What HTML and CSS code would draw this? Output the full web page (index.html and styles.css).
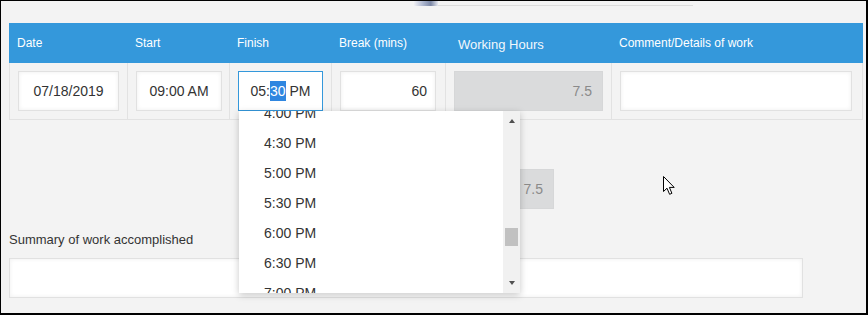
FILE: index.html
```html
<!DOCTYPE html>
<html lang="en">
<head>
    <meta charset="UTF-8">
    <title>Timesheet</title>
    <link rel="stylesheet" href="styles.css">
</head>
<body>
<div class="page">
    <div class="topstrip">
        <div class="thumbnail"></div>
        <div class="rule"></div>
    </div>

    <div class="sheet">
        <div class="row head">
            <div class="cell">Date</div>
            <div class="cell">Start</div>
            <div class="cell">Finish</div>
            <div class="cell">Break (mins)</div>
            <div class="cell wide">Working Hours</div>
            <div class="cell">Comment/Details of work</div>
        </div>
        <div class="row body">
            <div class="cell"><div class="field date">07/18/2019</div></div>
            <div class="cell"><div class="field start">09:00 AM</div></div>
            <div class="cell"><div class="field finish focus">05:<span class="sel">30</span> PM</div></div>
            <div class="cell"><div class="field brk right">60</div></div>
            <div class="cell"><div class="field hours right readonly">7.5</div></div>
            <div class="cell"><div class="field comment"></div></div>
        </div>
    </div>

    <div class="totals">
        <div class="field total right readonly">7.5</div>
    </div>

    <div class="label">Summary of work accomplished</div>
    <div class="field summary"></div>
</div>

<div class="dropdown">
    <div class="options">
        <div class="list">
            <div class="option">4:00 PM</div>
            <div class="option">4:30 PM</div>
            <div class="option">5:00 PM</div>
            <div class="option">5:30 PM</div>
            <div class="option">6:00 PM</div>
            <div class="option">6:30 PM</div>
            <div class="option">7:00 PM</div>
        </div>
    </div>
    <div class="scrollbar">
        <div class="arrow up"></div>
        <div class="track"><div class="thumb"></div></div>
        <div class="arrow down"></div>
    </div>
</div>

<svg class="cursor" width="13" height="20" viewBox="0 0 13 20">
    <path d="M0.5 0.5 L0.5 15.5 L4 12.2 L6.6 18.3 L8.9 17.3 L6.4 11.4 L11.2 11.4 Z" fill="#fff" stroke="#000" stroke-width="1" stroke-linejoin="miter"/>
</svg>
</body>
</html>
```

FILE: styles.css
```css
html, body {
    margin: 0;
}
body {
    position: relative;
    width: 865px;
    height: 312px;
    border-style: solid;
    border-color: #000;
    border-width: 1px 2px 2px 1px;
    background: #f3f3f3;
    font-family: "Liberation Sans", Arial, sans-serif;
    color: #333;
    overflow: hidden;
}
.page {
    padding-left: 8px;
}

.topstrip {
    display: flex;
    align-items: flex-end;
    height: 5px;
    padding-left: 405px;
}
.thumbnail {
    width: 24px;
    height: 5px;
    background: linear-gradient(90deg, #f0f0f4 0%, #a9b3cc 40%, #7c88a6 70%, #e5e7ee 100%);
}
.rule {
    width: 255px;
    height: 1px;
    background: #dcdcdc;
}

.sheet {
    margin-top: 17px;
    width: 854px;
}
.row {
    display: grid;
    grid-template-columns: 118px 102px 102px 114px 166px 1fr;
}
.head {
    height: 40px;
    background: #3498db;
    color: #fff;
    font-size: 12px;
}
.head .cell {
    display: flex;
    align-items: center;
    padding-left: 8px;
}
.head .wide {
    font-size: 13px;
    padding-left: 13px;
    padding-top: 2px;
    color: #f2f7fc;
}
.body {
    border-bottom: 1px solid #e2e2e2;
    border-right: 1px solid #e2e2e2;
}
.body .cell {
    border-left: 1px solid #e2e2e2;
    padding: 8px 0 8px 8px;
}

.field {
    box-sizing: border-box;
    height: 40px;
    background: #fff;
    border: 1px solid #e1e1e1;
    box-shadow: inset 0 0 4px rgba(0, 0, 0, 0.07);
    font-size: 14px;
    line-height: 38px;
    text-align: center;
}
.field.right {
    text-align: right;
    padding-right: 8px;
}
.field.readonly {
    background: #dadbdc;
    border-color: #d6d7d8;
    box-shadow: none;
    color: #8a8a8a;
    padding-right: 10px;
}
.field.focus {
    border-color: #3498db;
    box-shadow: none;
}
.sel {
    display: inline-block;
    line-height: 20px;
    background: #2f86e0;
    color: #fff;
}
.date { width: 101px; }
.start { width: 86px; }
.finish { width: 85px; }
.brk { width: 96px; }
.hours { width: 149px; }
.comment { width: 232px; }

.totals {
    margin-top: 49px;
    padding-left: 445px;
}
.total {
    width: 100px;
    padding-right: 11px;
}

.label {
    margin-top: 23px;
    font-size: 13px;
    line-height: 16px;
}
.summary {
    margin-top: 10px;
    width: 794px;
}

.dropdown {
    position: absolute;
    left: 238px;
    top: 110px;
    width: 281px;
    height: 182px;
    display: flex;
    background: #fff;
    box-shadow: 0 2px 7px rgba(0, 0, 0, 0.22);
}
.options {
    flex: 1;
    overflow: hidden;
}
.list {
    margin-top: -13px;
}
.option {
    height: 30px;
    line-height: 30px;
    padding-left: 25px;
    font-size: 14px;
    color: #333;
}
.scrollbar {
    width: 17px;
    display: flex;
    flex-direction: column;
    background: #f1f1f1;
}
.arrow {
    height: 17px;
    display: flex;
    justify-content: center;
}
.arrow::before {
    content: "";
    width: 0;
    height: 0;
    border-left: 3.5px solid transparent;
    border-right: 3.5px solid transparent;
}
.arrow.up {
    align-items: flex-start;
}
.arrow.up::before {
    margin-top: 8px;
    border-bottom: 4px solid #505050;
}
.arrow.down {
    align-items: flex-end;
}
.arrow.down::before {
    margin-bottom: 8px;
    border-top: 4px solid #505050;
}
.track {
    flex: 1;
}
.thumb {
    margin: 100px 2px 0 2px;
    height: 18px;
    background: #c1c1c1;
}

.cursor {
    position: absolute;
    left: 662px;
    top: 175px;
}
```
